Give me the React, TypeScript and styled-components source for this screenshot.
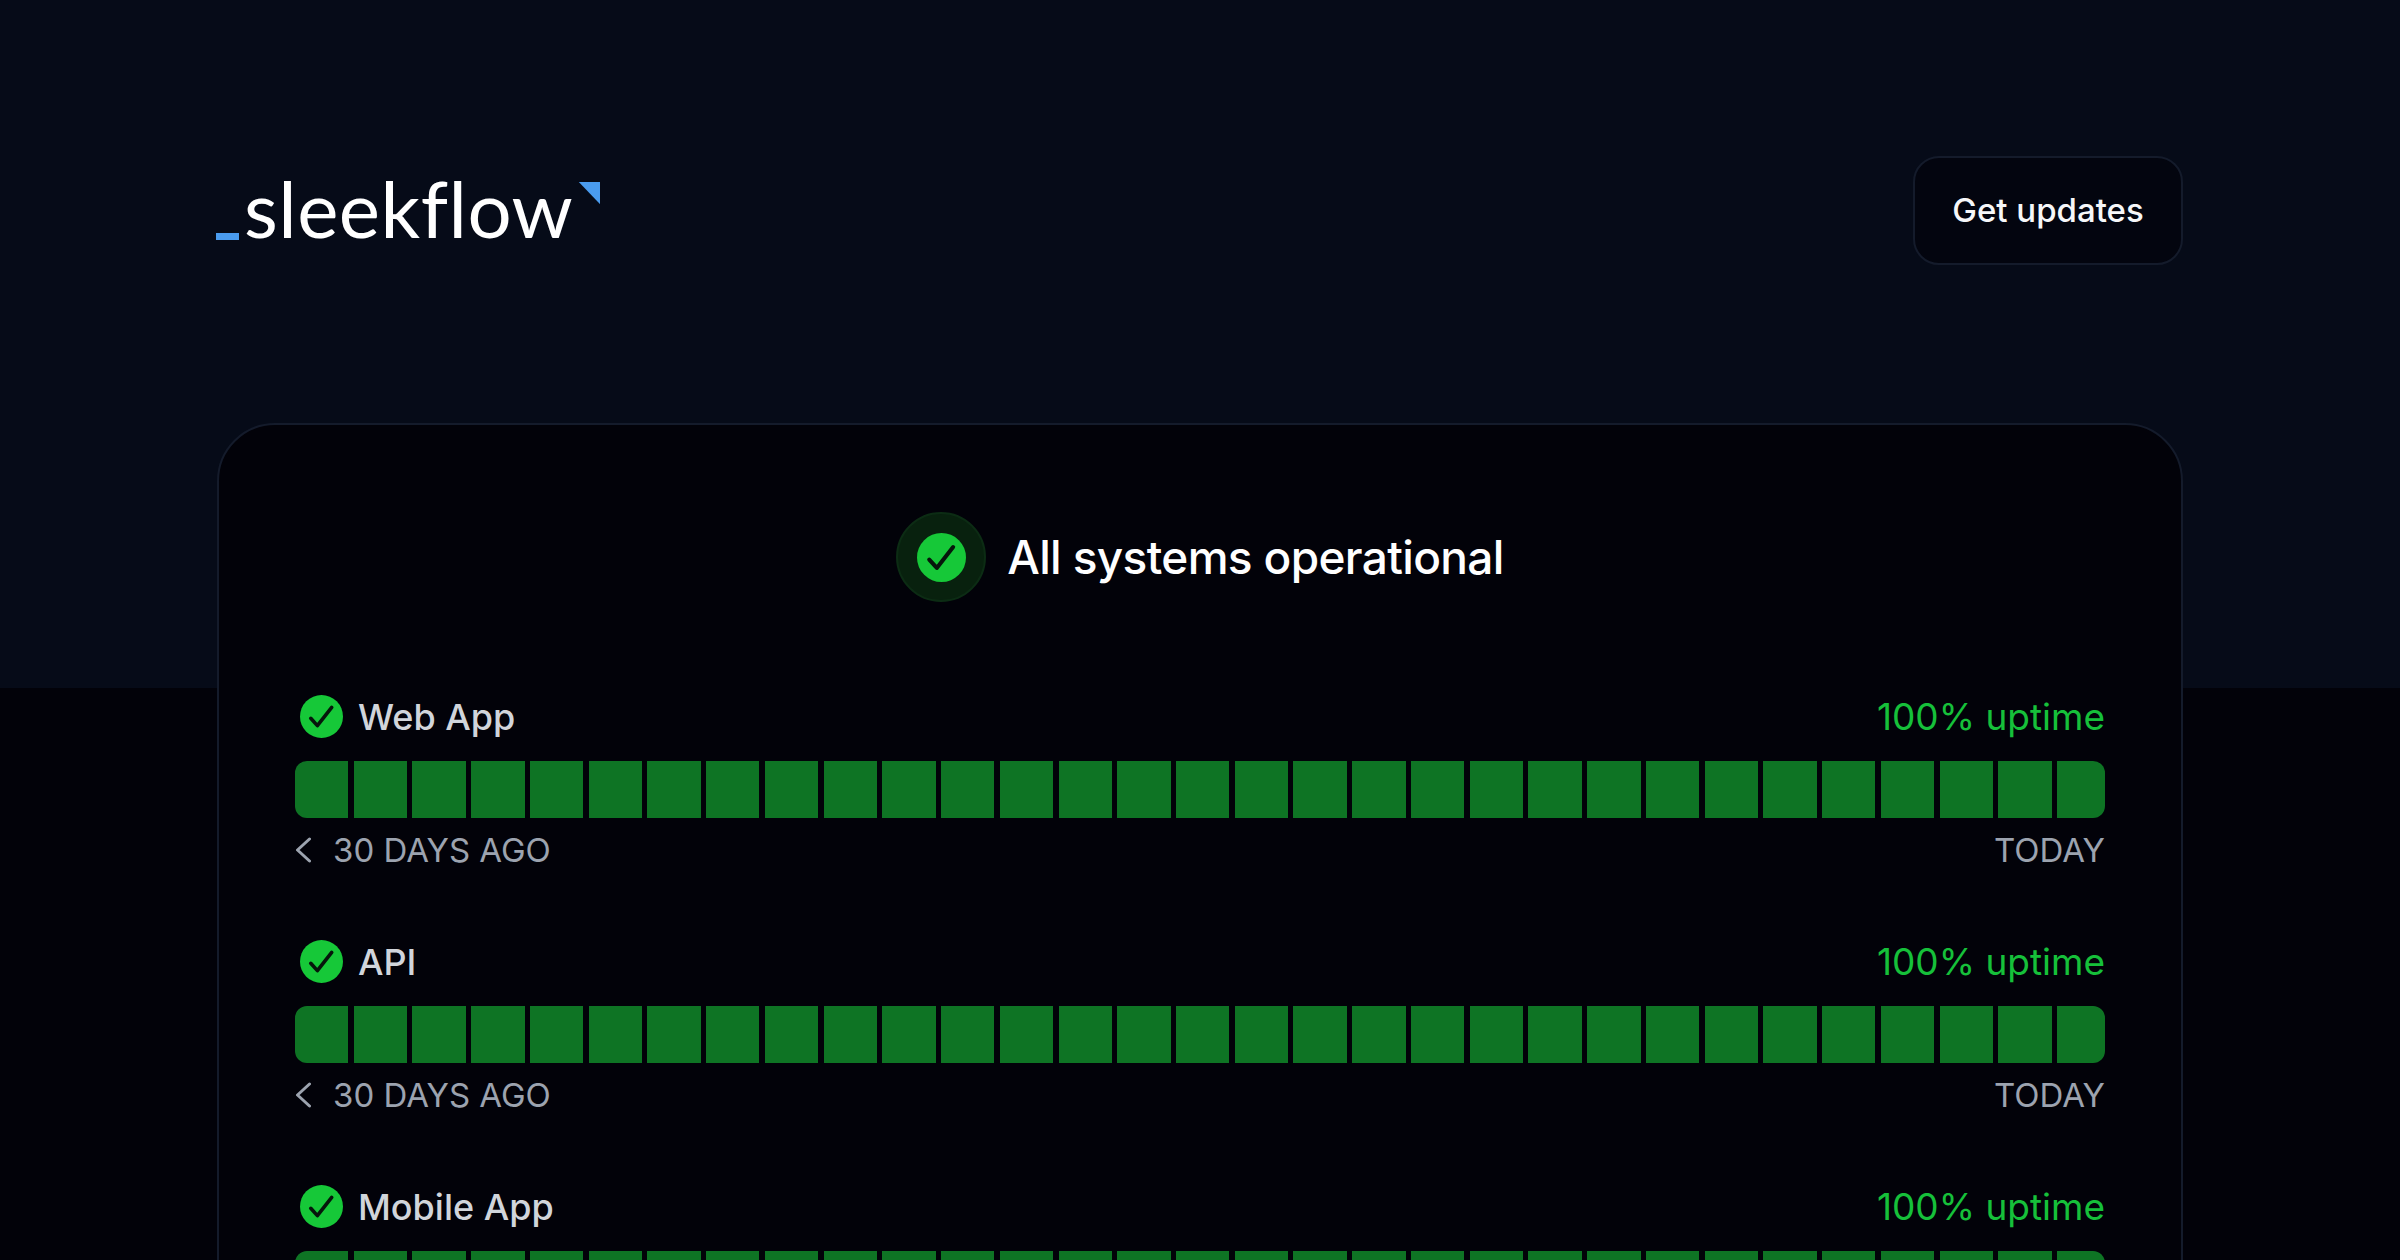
import React from 'react';
import styled, { createGlobalStyle } from 'styled-components';

const GlobalStyle = createGlobalStyle`
    html, body {
        margin: 0;
        padding: 0;
        height: 1260px;
        overflow: hidden;
        background: #020209;
    }
`;

const Page = styled.div`
    box-sizing: border-box;
    height: 1260px;
    overflow: hidden;
    padding: 156px 217px 0;
    background: linear-gradient(#060b18 688px, #020209 688px);
    font-family: Inter, 'Liberation Sans', sans-serif;
`;

const Header = styled.header`
    display: flex;
    align-items: center;
    justify-content: space-between;
    height: 109px;
`;

const Logo = styled.div`
    display: flex;
    align-items: flex-start;
    height: 58px;
    margin-left: -1px;
`;

const LogoDash = styled.span`
    align-self: flex-end;
    width: 23px;
    height: 7px;
    background: #4a9cef;
`;

const LogoText = styled.span`
    margin: -3px 5px 0 5px;
    font-family: Lato, sans-serif;
    font-size: 78px;
    font-variant-ligatures: none;
    letter-spacing: 0.5px;
    line-height: 58px;
    color: #ffffff;
`;

const LogoCorner = styled.span`
    width: 22px;
    height: 23px;
    background: #4a9cef;
    clip-path: polygon(0 0, 100% 0, 100% 100%);
`;

const UpdatesButton = styled.button`
    box-sizing: border-box;
    width: 270px;
    height: 109px;
    padding: 0 0 2px;
    border: 2px solid #141b2b;
    border-radius: 26px;
    background: #03050f;
    color: #f6f7f9;
    font-family: inherit;
    font-size: 33px;
    font-weight: 500;
`;

const Card = styled.main`
    box-sizing: border-box;
    margin-top: 158px;
    padding: 87px 76px 0;
    height: 1000px;
    border: 2px solid #141b2b;
    border-radius: 58px;
    background: #020209;
`;

const Summary = styled.div`
    display: flex;
    align-items: center;
    justify-content: center;
    gap: 21px;
    margin-bottom: 93px;
`;

const SummaryRing = styled.span`
    box-sizing: border-box;
    display: flex;
    align-items: center;
    justify-content: center;
    width: 90px;
    height: 90px;
    border: 2px solid #0c2c14;
    border-radius: 50%;
    background: #08210e;
`;

const SummaryText = styled.h1`
    margin: 0;
    font-size: 46px;
    font-weight: 500;
    letter-spacing: -0.65px;
    color: #ffffff;
`;

const Service = styled.section`
    height: 245px;
`;

const ServiceHead = styled.div`
    display: flex;
    align-items: center;
    justify-content: space-between;
    height: 43px;
`;

const ServiceName = styled.div`
    display: flex;
    align-items: center;
    gap: 15px;
    padding-left: 5px;
    font-size: 36px;
    font-weight: 500;
    color: #d1d5db;
`;

const Uptime = styled.span`
    font-size: 37px;
    font-weight: 400;
    color: #16c03a;
`;

const Bar = styled.div`
    display: flex;
    gap: 5.4px;
    height: 57px;
    margin-top: 23px;
    border-radius: 12px;
    overflow: hidden;
`;

const Day = styled.span`
    flex: 0 0 53.35px;
    background: #0e7424;
`;

const Range = styled.div`
    display: flex;
    align-items: center;
    justify-content: space-between;
    height: 32px;
    margin-top: 16px;
    font-size: 33px;
    color: #9ca3af;
`;

const RangeStart = styled.span`
    display: flex;
    align-items: center;
    gap: 22px;
`;

const CheckBadge = ({ size }: { size: number }) => (
    <svg width={size} height={size} viewBox="0 0 24 24" aria-hidden="true">
        <circle cx="12" cy="12" r="12" fill="#16c838" />
        <path
            d="M6 13l3.7 4.1 8-10.2"
            fill="none"
            stroke="#06160b"
            strokeWidth="2"
            strokeLinecap="round"
            strokeLinejoin="round"
        />
    </svg>
);

const Chevron = () => (
    <svg width="16" height="26" viewBox="0 0 16 26" aria-hidden="true">
        <path
            d="M14.5 2L2.5 13l12 11"
            fill="none"
            stroke="#9ca3af"
            strokeWidth="3"
            strokeLinecap="round"
            strokeLinejoin="round"
        />
    </svg>
);

// the shot stops inside the third bar, so its range line is never visible
const services = [
    { name: 'Web App', showRange: true },
    { name: 'API', showRange: true },
    { name: 'Mobile App', showRange: false },
];
const days = Array.from({ length: 31 }, (_, i) => i);

export default function App() {
    return (
        <Page>
            <GlobalStyle />
            <Header>
                <Logo>
                    <LogoDash />
                    <LogoText>sleekflow</LogoText>
                    <LogoCorner />
                </Logo>
                <UpdatesButton>Get updates</UpdatesButton>
            </Header>
            <Card>
                <Summary>
                    <SummaryRing>
                        <CheckBadge size={49} />
                    </SummaryRing>
                    <SummaryText>All systems operational</SummaryText>
                </Summary>
                {services.map(({ name, showRange }) => (
                    <Service key={name}>
                        <ServiceHead>
                            <ServiceName>
                                <CheckBadge size={43} />
                                {name}
                            </ServiceName>
                            <Uptime>100% uptime</Uptime>
                        </ServiceHead>
                        <Bar>
                            {days.map((day) => (
                                <Day key={day} />
                            ))}
                        </Bar>
                        {showRange && (
                            <Range>
                                <RangeStart>
                                    <Chevron />
                                    30 DAYS AGO
                                </RangeStart>
                                <span>TODAY</span>
                            </Range>
                        )}
                    </Service>
                ))}
            </Card>
        </Page>
    );
}
